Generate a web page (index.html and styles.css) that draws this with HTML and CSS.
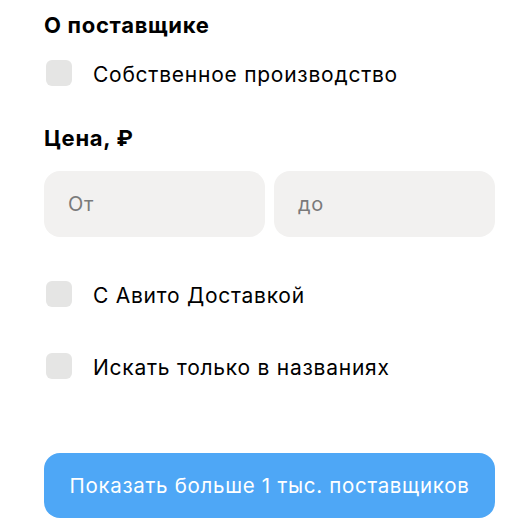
FILE: index.html
```html
<!DOCTYPE html>
<html lang="ru">
<head>
<meta charset="utf-8">
<link rel="stylesheet" href="styles.css">
</head>
<body>
<div class="panel">
  <h2 class="title title-first">О поставщике</h2>
  <label class="check check-first"><span class="box"></span><span class="label">Собственное производство</span></label>
  <h2 class="title title-price">Цена, ₽</h2>
  <div class="range">
    <div class="field">От</div>
    <div class="field">до</div>
  </div>
  <label class="check check-delivery"><span class="box"></span><span class="label">С Авито Доставкой</span></label>
  <label class="check check-names"><span class="box"></span><span class="label">Искать только в названиях</span></label>
  <button class="submit">Показать больше 1 тыс. поставщиков</button>
</div>
</body>
</html>
```

FILE: styles.css
```css
html, body {
  margin: 0;
  padding: 0;
  background: #ffffff;
}
body {
  font-family: Inter, "Noto Sans", "Liberation Sans", sans-serif;
  color: #000000;
}
.panel {
  width: 451px;
  margin-left: 44px;
  display: flex;
  flex-direction: column;
}
.title {
  margin: 0;
  font-size: 22px;
  line-height: 24px;
  font-weight: 700;
  letter-spacing: 0.7px;
  padding-left: 0;
}
.title-first { margin-top: 13px; }
.title-price { margin-top: 40px; }
.check {
  display: flex;
  align-items: center;
  gap: 21px;
  height: 26px;
  padding-left: 2px;
}
.check-first { margin-top: 23px; }
.check-delivery { margin-top: 44px; }
.check-names { margin-top: 46px; }
.box {
  width: 26px;
  height: 26px;
  border-radius: 6px;
  background: #e5e5e4;
  flex: none;
}
.label {
  font-size: 21px;
  line-height: 24px;
  letter-spacing: 0.75px;
  margin-top: 3px;
}
.range {
  margin-top: 21px;
  display: grid;
  grid-template-columns: 1fr 1fr;
  gap: 9px;
}
.field {
  height: 66px;
  border-radius: 16px;
  background: #f2f1f0;
  display: flex;
  align-items: center;
  padding-left: 24px;
  font-size: 20px;
  letter-spacing: 0.6px;
  color: #7a7a7a;
}
.submit {
  margin-top: 74px;
  height: 65px;
  border: none;
  border-radius: 16px;
  background: #4ea7f6;
  color: #ffffff;
  font-family: Inter, "Noto Sans", "Liberation Sans", sans-serif;
  font-size: 20.5px;
  letter-spacing: 0.7px;
  padding: 0;
}
```
